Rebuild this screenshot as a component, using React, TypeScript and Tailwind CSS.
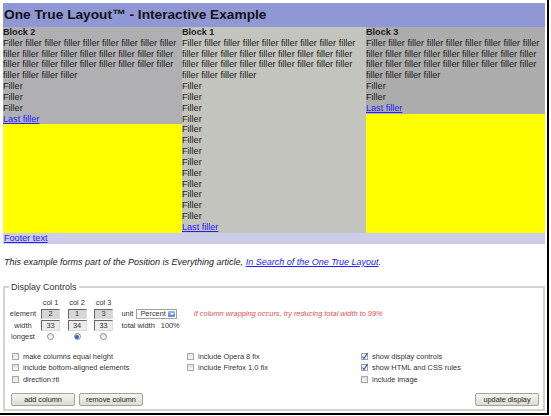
import React from 'react';

const longLines = [
  'Filler filler filler filler filler filler filler filler filler',
  'filler filler filler filler filler filler filler filler filler',
  'filler filler filler filler filler filler filler filler filler',
  'filler filler filler filler',
];

function Block({ title, fillers, bg }: { title: string; fillers: number; bg: string }) {
  return (
    <div className={`${bg} text-[#1a1a1a]`}>
      <div className="font-bold">{title}</div>
      {longLines.map((l, i) => (
        <div key={i} className="whitespace-nowrap">{l}</div>
      ))}
      {Array.from({ length: fillers }).map((_, i) => (
        <div key={'f' + i}>Filler</div>
      ))}
      <div>
        <a href="#" className="text-[#2222ff] underline">Last filler</a>
      </div>
    </div>
  );
}

function Radio({ checked = false }: { checked?: boolean }) {
  return (
    <span className="flex h-[7px] w-[7px] items-center justify-center rounded-full border border-[#8a8a8a] bg-gradient-to-b from-[#e4e4e4] to-white">
      {checked && <span className="h-[4px] w-[4px] rounded-full bg-[#2f5fd8]" />}
    </span>
  );
}

function Check({ checked = false, label }: { checked?: boolean; label: string }) {
  return (
    <div className="flex h-[11.5px] items-center gap-[4px] whitespace-nowrap">
      {checked ? (
        <svg width="7" height="7" viewBox="0 0 7 7" className="shrink-0">
          <rect x="0.5" y="0.5" width="6" height="6" fill="#f4f4f4" stroke="#a0a0a0" />
          <path d="M1.5 3.5 L3 5.5 L6.5 0" fill="none" stroke="#2d57c8" strokeWidth="1.2" />
        </svg>
      ) : (
        <span className="h-[7px] w-[7px] shrink-0 border border-[#a8a8a8] bg-gradient-to-b from-[#dedede] to-[#f8f8f8]" />
      )}
      <span>{label}</span>
    </div>
  );
}

function Btn({ children }: { children: React.ReactNode }) {
  return (
    <button className="flex h-[13px] w-[64px] items-center justify-center rounded-[2px] border border-[#a3a19a] bg-gradient-to-b from-[#f6f5f1] to-[#dedbd2] text-[7.3px] leading-none text-[#222]">
      {children}
    </button>
  );
}

export default function App() {
  const cell = 'flex items-center justify-center text-[#333]';
  const elInput = 'flex h-[10.5px] w-[19px] items-center justify-center border border-t-[#666] border-l-[#666] border-r-[#ddd] border-b-[#ddd] bg-[#d6d6d6]';
  const wInput = 'flex h-[10.5px] w-[19px] items-center justify-center border border-t-[#666] border-l-[#666] border-r-[#ddd] border-b-[#ddd] bg-[#ececec]';

  return (
    <div className="h-[415px] w-[549px] border-b-2 border-r-2 border-black bg-white pl-[3px] pt-[3px] font-['Liberation_Sans',Arial,sans-serif]">
      <div className="w-[542px]">
        {/* header */}
        <div className="flex h-[24px] items-center bg-[#9097d5] pl-[1px] text-[13.7px] font-bold text-[#111]">
          One True Layout™ - Interactive Example
        </div>

        {/* columns */}
        <div className="flex text-[9.1px] leading-[10.83px]">
          <div className="w-[179px] bg-[#ffff00]">
            <Block title="Block 2" fillers={3} bg="bg-[#b0b0b2]" />
          </div>
          <div className="w-[184px] bg-[#ffff00]">
            <Block title="Block 1" fillers={13} bg="bg-[#c4c4be]" />
          </div>
          <div className="w-[179px] bg-[#ffff00]">
            <Block title="Block 3" fillers={2} bg="bg-[#acacac]" />
          </div>
        </div>

        {/* footer */}
        <div className="h-[11px] bg-[#cdcdea] pl-[1px] text-[9.1px] leading-[11px]">
          <a href="#" className="text-[#2222ff] underline">Footer text</a>
        </div>

        <p className="mt-[13px] pl-[1px] text-[9px] italic leading-[11px] text-[#222]">
          This example forms part of the Position is Everything article,{' '}
          <a href="#" className="text-[#2222ff] underline">In Search of the One True Layout</a>.
        </p>

        {/* controls */}
        <fieldset className="mt-[14px] border-2 border-[#d5d3cb] pb-[3px] text-[7.4px] text-[#333]">
          <legend className="ml-[4px] px-[2px] text-[9px] leading-[10px] text-[#333]">Display Controls</legend>

          <div className="flex items-start pt-[5px]">
            <div className="grid grid-cols-[36px_26.5px_26.5px_26.5px] auto-rows-[11.5px]">
              <div />
              <div className="flex w-[19px] items-center justify-center">col 1</div>
              <div className="flex w-[19px] items-center justify-center">col 2</div>
              <div className="flex w-[19px] items-center justify-center">col 3</div>

              <div className={cell}>element</div>
              <div className="flex items-center"><span className={elInput}>2</span></div>
              <div className="flex items-center"><span className={elInput}>1</span></div>
              <div className="flex items-center"><span className={elInput}>3</span></div>

              <div className={cell}>width</div>
              <div className="flex items-center"><span className={wInput}>33</span></div>
              <div className="flex items-center"><span className={wInput}>34</span></div>
              <div className="flex items-center"><span className={wInput}>33</span></div>

              <div className={cell}>longest</div>
              <div className="flex w-[19px] items-center justify-center"><Radio /></div>
              <div className="flex w-[19px] items-center justify-center"><Radio checked /></div>
              <div className="flex w-[19px] items-center justify-center"><Radio /></div>
            </div>

            <div className="ml-[1px] mt-[11.5px] flex flex-col">
              <div className="flex h-[11.5px] items-center gap-[3px]">
                <span>unit</span>
                <span className="flex h-[10px] w-[41px] items-center justify-between border border-[#a0a0a0] bg-white pl-[3px] pr-[1px]">
                  <span>Percent</span>
                  <span className="flex h-[6px] w-[7px] items-center justify-center rounded-[1px] bg-gradient-to-b from-[#9bb8f0] to-[#5b82d8]">
                    <span className="h-0 w-0 border-x-[2px] border-t-[2px] border-x-transparent border-t-white" />
                  </span>
                </span>
              </div>
              <div className="flex h-[11.5px] items-center gap-[6px]">
                <span>total width</span>
                <span>100%</span>
              </div>
            </div>

            <div className="ml-[14px] mt-[11.5px] flex h-[11.5px] items-center italic text-[#e05050]">
              If column wrapping occurs, try reducing total width to 99%
            </div>
          </div>

          <div className="mt-[8px] grid grid-cols-[175px_174px_1fr] pl-[7px]">
            <div>
              <Check label="make columns equal height" />
              <Check label="include bottom-aligned elements" />
              <Check label="direction:rtl" />
            </div>
            <div>
              <Check label="include Opera 8 fix" />
              <Check label="include Firefox 1.0 fix" />
            </div>
            <div>
              <Check checked label="show display controls" />
              <Check checked label="show HTML and CSS rules" />
              <Check label="include image" />
            </div>
          </div>

          <div className="mt-[8px] flex items-center justify-between pl-[6px] pr-[4px]">
            <div className="flex gap-[4px]">
              <Btn>add column</Btn>
              <Btn>remove column</Btn>
            </div>
            <Btn>update display</Btn>
          </div>
        </fieldset>
      </div>
    </div>
  );
}
